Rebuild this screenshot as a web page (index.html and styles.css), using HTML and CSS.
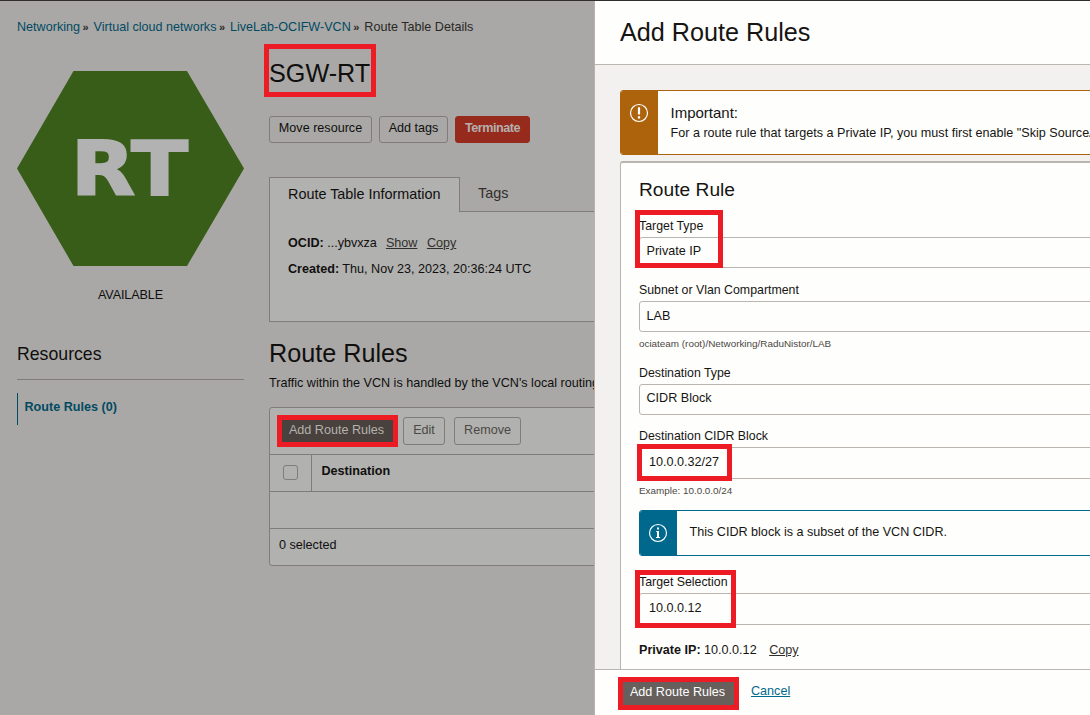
FILE: index.html
```html
<!DOCTYPE html>
<html lang="en">
<head>
<meta charset="utf-8">
<title>Route Table Details</title>
<link rel="stylesheet" href="styles.css">
</head>
<body>
<div class="app">
  <main class="page">
    <nav class="crumbs"><a>Networking</a><i>»</i><a>Virtual cloud networks</a><i>»</i><a>LiveLab-OCIFW-VCN</a><i>»</i><span>Route Table Details</span></nav>
    <div class="columns">
      <aside class="side">
        <svg class="hex" width="227" height="195" viewBox="0 0 227 195">
          <path d="M0 97.500 56.500 0H170L227 97.500 170 195H56.500Z" fill="#385d18"/>
          <text class="hex-label" x="54" y="124" textLength="117" lengthAdjust="spacingAndGlyphs">RT</text>
        </svg>
        <div class="status">AVAILABLE</div>
        <h3 class="resources">Resources</h3>
        <div class="side-link">Route Rules (0)</div>
      </aside>
      <section class="content">
        <h1 class="title marked">SGW-RT<b class="mark mark-title"></b></h1>
        <div class="actions">
          <button class="btn w103">Move resource</button>
          <button class="btn w69">Add tags</button>
          <button class="btn danger">Terminate</button>
        </div>
        <div class="tabs"><div class="tab active">Route Table Information</div><div class="tab">Tags</div></div>
        <div class="info">
          <p><b>OCID:</b> ...ybvxza <u class="first">Show</u><u>Copy</u></p>
          <p><b>Created:</b> Thu, Nov 23, 2023, 20:36:24 UTC</p>
        </div>
        <h2 class="subtitle">Route Rules</h2>
        <p class="traffic">Traffic within the VCN is handled by the VCN's local routing</p>
        <div class="table">
          <div class="toolbar">
            <button class="btn primary marked">Add Route Rules<b class="mark mark-btn"></b></button>
            <button class="btn off w42">Edit</button>
            <button class="btn off w67">Remove</button>
          </div>
          <div class="thead"><div class="check"><span class="box"></span></div><b class="dest">Destination</b></div>
          <div class="empty"></div>
          <div class="tfoot">0 selected</div>
        </div>
      </section>
    </div>
  </main>
  <section class="drawer">
    <header class="drawer-head">Add Route Rules</header>
    <div class="drawer-body">
      <div class="alert warn">
        <div class="alert-icon">
          <svg width="20" height="20" viewBox="0 0 20 20" fill="none" stroke="#fff"><circle cx="10" cy="10" r="8.500" stroke-width="1.200"/><path d="M10 4.300V11.600M10 13.200V15.500" stroke-width="2.200"/></svg>
        </div>
        <div class="alert-text"><div class="important">Important:</div><div class="alert-line">For a route rule that targets a Private IP, you must first enable "Skip Source/</div></div>
      </div>
      <div class="rule">
        <h3 class="rule-title">Route Rule</h3>
        <div class="field marked f1"><label>Target Type</label><div class="input high">Private IP</div><b class="mark mark-type"></b></div>
        <div class="field f2"><label>Subnet or Vlan Compartment</label><div class="input">LAB</div><small>ociateam (root)/Networking/RaduNistor/LAB</small></div>
        <div class="field f3"><label>Destination Type</label><div class="input high">CIDR Block</div></div>
        <div class="field marked f4"><label>Destination CIDR Block</label><div class="input tall">10.0.0.32/27</div><small>Example: 10.0.0.0/24</small><b class="mark mark-cidr"></b></div>
        <div class="alert note">
          <div class="alert-icon">
            <svg width="20" height="20" viewBox="0 0 20 20" fill="none" stroke="#fff"><circle cx="10" cy="10" r="8.500" stroke-width="1.200"/><path d="M10 4.500V6.500M10 8V14.800" stroke-width="2"/><path d="M8.200 8.500H10M8 14.500H12" stroke-width="1"/></svg>
          </div>
          <div class="alert-line">This CIDR block is a subset of the VCN CIDR.</div>
        </div>
        <div class="field marked f5"><label>Target Selection</label><div class="input tall">10.0.0.12</div><b class="mark mark-sel"></b></div>
        <p class="private"><b>Private IP:</b> 10.0.0.12 <u>Copy</u></p>
      </div>
    </div>
    <footer class="drawer-foot">
      <button class="btn submit marked">Add Route Rules<b class="mark mark-submit"></b></button>
      <a class="cancel">Cancel</a>
    </footer>
  </section>
</div>
</body>
</html>
```

FILE: styles.css
```css
* { box-sizing: border-box; }
body { margin: 0; overflow: hidden; font: 12.6px/16px "Liberation Sans", Arial, sans-serif; color: #161513; }
h1, h2, h3, p { margin: 0; font-weight: 400; white-space: nowrap; }
.app { display: flex; width: 1090px; height: 715px; border-top: 1px solid #312d2a; overflow: hidden; }
.marked { position: relative; }
.mark { position: absolute; border: 5px solid #ed1c24; }

.page { width: 594px; overflow: hidden; background: #a9a8a6; color: #100f0e; padding-left: 17px; }
.crumbs { display: flex; height: 43px; padding-top: 18px; white-space: nowrap; color: #2a2724; }
.crumbs a { color: #024a62; }
.crumbs i { width: 13.500px; padding-left: 2.500px; font-style: normal; font-size: 11px; font-weight: 700; line-height: 17px; }
.columns { display: flex; gap: 25px; }
.side { width: 227px; padding-top: 27px; }
.hex { display: block; }
.hex-label { font: 700 75px "DejaVu Sans", sans-serif; fill: #b2b2b2; stroke: #b2b2b2; stroke-width: 2px; }
.status { margin-top: 21px; text-align: center; letter-spacing: -.1px; }
.resources { height: 77px; padding-top: 40px; font-size: 17.7px; line-height: 22px; border-bottom: 1px solid #7f7c79; }
.side-link { margin-top: 13px; height: 32px; padding: 6px 0 0 6.500px; border-left: 1px solid #024a62; color: #024a62; font-weight: 700; }

.content { width: 500px; flex: none; }
.title { height: 72px; padding-top: 14px; font-size: 25.2px; line-height: 30px; }
.mark-title { left: -5px; top: 0; width: 112px; height: 53px; }
.actions { display: flex; gap: 7px; height: 61px; }
.btn { height: 27px; padding: 0 0 3px; font: 12.6px/16px "Liberation Sans", Arial, sans-serif; color: #100f0e; background: none; border: 1px solid #7f7c79; border-radius: 3px; white-space: nowrap; }
.w103 { width: 103px; }
.w69 { width: 69px; }
.w42 { width: 42px; }
.w67 { width: 67px; }
.danger { width: 75px; background: #962a1c; border-color: #962a1c; color: #b4b0ad; font-weight: 700; letter-spacing: -.45px; }
.tabs { display: flex; height: 35px; border-bottom: 1px solid #7f7c79; }
.tab { padding: 7px 18px 0; font-size: 14.4px; line-height: 18px; color: #312e2b; }
.tab.active { width: 191px; height: 35px; padding-top: 7px; background: #b1b1af; border: 1px solid #7f7c79; border-bottom: 0; color: #100f0e; white-space: nowrap; }
.info { height: 110px; padding: 23px 18px 0; background: #b1b1af; border: 1px solid #7f7c79; border-top: 0; }
.info p { margin-bottom: 10px; }
.info u { margin-left: 9.500px; color: #312e2b; text-underline-offset: 1px; }
.info .first { margin-left: 5.500px; }
.subtitle { height: 53px; padding-top: 16px; font-size: 25.2px; line-height: 30px; }
.traffic { height: 32px; }
.table { height: 159px; background: #b1b1af; border: 1px solid #7f7c79; border-radius: 3px; }
.toolbar { display: flex; height: 47px; padding: 9px 0 0 12px; border-bottom: 1px solid #7f7c79; }
.toolbar .btn { height: 28px; }
.toolbar .primary { width: 112px; margin-right: 9px; padding-right: 3px; background: #48413d; border-color: #48413d; color: #b4b1ae; }
.toolbar .off { color: #4b4845; margin-right: 9px; }
.mark-btn { left: -6px; top: -3px; width: 121px; height: 32px; }
.thead { display: flex; height: 37px; border-bottom: 1px solid #7f7c79; }
.check { width: 42px; padding: 10px 0 0 13px; border-right: 1px solid #7f7c79; }
.box { display: block; width: 15px; height: 15px; border: 1px solid #7f7c79; border-radius: 3px; }
.dest { padding: 8px 9.500px; }
.empty { height: 37px; border-bottom: 1px solid #7f7c79; }
.tfoot { padding: 8px 9px; }

.drawer { display: flex; flex-direction: column; width: 496px; border-left: 1px solid #b8b2ab; background: #fefefc; overflow: hidden; }
.drawer-head { height: 64px; padding: 16px 25px 0; border-bottom: 1px solid #bab5ae; font-size: 25.2px; line-height: 30px; }
.drawer-body { flex: 1; padding: 25px 0 0 25px; background: #f3f1f0; overflow: hidden; }
.alert { display: flex; width: 600px; background: #fefefc; border: 1px solid; border-radius: 3px; overflow: hidden; white-space: nowrap; }
.alert-icon { width: 37px; padding-left: 8px; }
.alert-icon svg { display: block; }
.warn { height: 65px; border-color: #ac630c; }
.warn .alert-icon { padding-top: 12px; background: #ac630c; }
.alert-text { padding: 13px 0 0 12.500px; }
.important { font-size: 15px; line-height: 18px; height: 21px; }
.rule { width: 600px; height: 700px; margin-top: 6px; padding: 15px 18px 0; background: #fefefc; border: 1px solid #bab5ae; border-top-width: 2px; border-radius: 3px; }
.rule-title { height: 39px; font-size: 19.2px; line-height: 23px; }
.field label { display: block; height: 20px; padding-top: 1px; font-size: 12.35px; line-height: 16px; }
.input { height: 31px; padding: 6px 6.500px; border: 1px solid #bab5ae; border-radius: 3px; }
.input.high { padding-top: 5px; }
.input.tall { height: 32px; padding: 6px 9px; }
.field small { display: block; padding-top: 5px; font-size: 9.9px; line-height: 14px; color: #4b4743; }
.f1 { height: 64px; }
.f2 { height: 83px; }
.f3 { height: 63px; }
.f4 { height: 83px; }
.note { height: 46px; border-color: #00688c; }
.note .alert-icon { padding-top: 12px; background: #00688c; }
.note .alert-line { padding: 13px 12.500px; }
.f5 { height: 68px; padding-top: 17px; margin-bottom: 18px; }
.mark-type { left: -4px; top: -7px; width: 88px; height: 58px; }
.mark-cidr { left: -2px; top: 17px; width: 95px; height: 37px; }
.mark-sel { left: -4px; top: 14px; width: 101px; height: 58px; }
.private u { margin-left: 9px; color: #312d2a; text-underline-offset: 1px; }
.drawer-foot { display: flex; height: 46px; padding: 8px 0 0 25px; border-top: 1px solid #bab5ae; }
.submit { width: 116px; height: 31px; padding: 0 1px 4px 0; color: #fff; background: #665f5b; border-color: #665f5b; }
.mark-submit { left: -3px; top: -2px; width: 121px; height: 33px; }
.cancel { margin: 5px 0 0 15px; color: #00688c; text-decoration: underline; text-underline-offset: 1px; }
```
